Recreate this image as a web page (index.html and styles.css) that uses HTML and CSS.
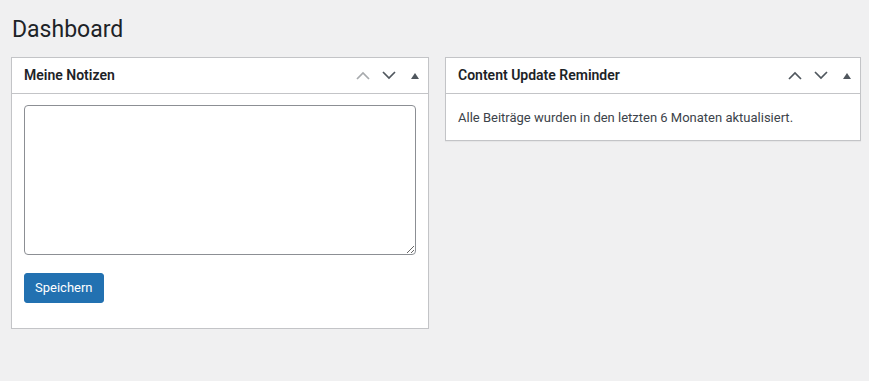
FILE: index.html
```html
<!DOCTYPE html>
<html lang="de">
<head>
<meta charset="utf-8">
<title>Dashboard</title>
<link rel="stylesheet" href="styles.css">
</head>
<body>
<div class="wrap">
  <h1 class="page-title">Dashboard</h1>
  <div class="columns">
    <div class="postbox">
      <div class="postbox-header">
        <h2 class="hndle">Meine Notizen</h2>
        <div class="handle-actions">
          <span class="handle-btn disabled"><svg width="14" height="9" viewBox="0 0 14 9"><path d="M1 8 L7 2 L13 8" fill="none" stroke="currentColor" stroke-width="1.7"/></svg></span>
          <span class="handle-btn"><svg width="14" height="9" viewBox="0 0 14 9"><path d="M1 1 L7 7 L13 1" fill="none" stroke="currentColor" stroke-width="1.7"/></svg></span>
          <span class="handle-btn toggle"><svg width="8" height="6" viewBox="0 0 8 6"><path d="M0 6 L4 0 L8 6 Z" fill="currentColor"/></svg></span>
        </div>
      </div>
      <div class="inside notes">
        <textarea class="note-area"></textarea>
        <button class="button-primary">Speichern</button>
      </div>
    </div>
    <div class="postbox short">
      <div class="postbox-header">
        <h2 class="hndle">Content Update Reminder</h2>
        <div class="handle-actions">
          <span class="handle-btn"><svg width="14" height="9" viewBox="0 0 14 9"><path d="M1 8 L7 2 L13 8" fill="none" stroke="currentColor" stroke-width="1.7"/></svg></span>
          <span class="handle-btn"><svg width="14" height="9" viewBox="0 0 14 9"><path d="M1 1 L7 7 L13 1" fill="none" stroke="currentColor" stroke-width="1.7"/></svg></span>
          <span class="handle-btn toggle"><svg width="8" height="6" viewBox="0 0 8 6"><path d="M0 6 L4 0 L8 6 Z" fill="currentColor"/></svg></span>
        </div>
      </div>
      <div class="inside">
        <p class="message">Alle Beiträge wurden in den letzten 6 Monaten aktualisiert.</p>
      </div>
    </div>
  </div>
</div>
</body>
</html>
```

FILE: styles.css
```css
html, body {
  margin: 0;
  padding: 0;
  background: #f0f0f1;
  font-family: "Segoe UI", Roboto, "Noto Sans", sans-serif;
  color: #3c434a;
  font-size: 13px;
}
.wrap {
  padding: 0 8px 0 11px;
}
.page-title {
  margin: 0;
  padding: 15px 0 13px 1px;
  font-size: 23px;
  font-weight: 400;
  line-height: 29px;
  color: #1d2327;
}
.columns {
  display: flex;
  gap: 16px;
  align-items: flex-start;
}
.postbox {
  width: 418px;
  box-sizing: border-box;
  background: #fff;
  border: 1px solid #c3c4c7;
  box-shadow: 0 1px 1px rgba(0,0,0,0.04);
}
.postbox-header {
  display: flex;
  align-items: center;
  justify-content: space-between;
  height: 35px;
  border-bottom: 1px solid #c3c4c7;
}
.hndle {
  margin: 0;
  padding: 0 12px;
  font-size: 14px;
  font-weight: 600;
  line-height: 1.4;
  color: #1d2327;
}
.handle-actions {
  display: flex;
  align-items: center;
  padding-right: 0;
}
.handle-btn {
  width: 26px;
  height: 35px;
  display: flex;
  align-items: center;
  justify-content: center;
  color: #50575e;
}
.handle-btn.disabled {
  color: #a7aaad;
}
.inside {
  padding: 0 12px 12px;
}
.notes {
  display: flex;
  flex-direction: column;
  align-items: flex-start;
  padding: 11px 12px 25px;
}
.note-area {
  width: 392px;
  height: 150px;
  box-sizing: border-box;
  border: 1px solid #8c8f94;
  border-radius: 4px;
  background: #fff;
  margin: 0 0 18px;
  font-family: inherit;
}
.button-primary {
  background: #2271b1;
  border: 1px solid #2271b1;
  border-radius: 3px;
  color: #fff;
  font-family: inherit;
  font-size: 13px;
  line-height: 2.15384615;
  min-height: 30px;
  padding: 0 10px;
  cursor: pointer;
}
.message {
  margin: 15px 0 0;
  line-height: 1.4;
}
.short .inside {
  padding-bottom: 13px;
}
```
